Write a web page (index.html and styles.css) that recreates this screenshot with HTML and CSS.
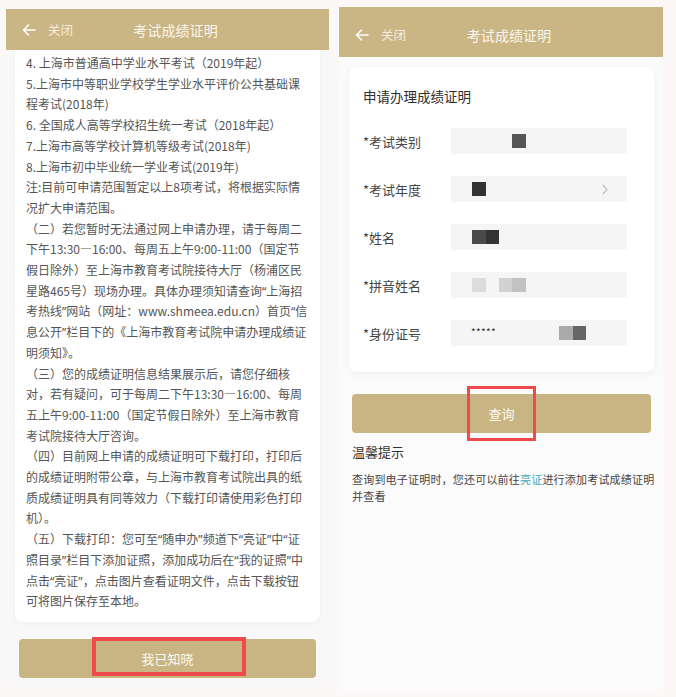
FILE: index.html
```html
<!DOCTYPE html>
<html lang="zh-CN">
<head>
<meta charset="utf-8">
<title>考试成绩证明</title>
<link rel="stylesheet" href="styles.css">
</head>
<body>
<div class="screens">
  <section class="phone phone-left">
    <header class="bar">
      <div class="bar-left">
        <svg class="back" viewBox="0 0 14 12" width="14" height="12"><path d="M13 6H1.5M6.5 1L1.5 6l5 5" fill="none" stroke="#fff" stroke-width="1.6" stroke-linecap="round" stroke-linejoin="round"/></svg>
        <span class="close">关闭</span>
      </div>
      <div class="bar-title">考试成绩证明</div>
      <div></div>
    </header>
    <div class="scroll">
      <div class="notice">
        <p>4. 上海市普通高中学业水平考试（2019年起）<br>5.上海市中等职业学校学生学业水平评价公共基础课<br>程考试(2018年)<br>6. 全国成人高等学校招生统一考试（2018年起）<br>7.上海市高等学校计算机等级考试(2018年)<br>8.上海市初中毕业统一学业考试(2019年)<br>注:目前可申请范围暂定以上8项考试，将根据实际情<br>况扩大申请范围。</p>
        <p>（二）若您暂时无法通过网上申请办理，请于每周二<br>下午13:30—16:00、每周五上午9:00-11:00（国定节<br>假日除外）至上海市教育考试院接待大厅（杨浦区民<br>星路465号）现场办理。具体办理须知请查询<span class="q">“</span>上海招<br>考热线<span class="q">”</span>网站（网址：www.shmeea.edu.cn）首页<span class="q">“</span>信<br>息公开<span class="q">”</span>栏目下的《上海市教育考试院申请办理成绩证<br>明须知》。</p>
        <p>（三）您的成绩证明信息结果展示后，请您仔细核<br>对，若有疑问，可于每周二下午13:30—16:00、每周<br>五上午9:00-11:00（国定节假日除外）至上海市教育<br>考试院接待大厅咨询。</p>
        <p>（四）目前网上申请的成绩证明可下载打印，打印后<br>的成绩证明附带公章，与上海市教育考试院出具的纸<br>质成绩证明具有同等效力（下载打印请使用彩色打印<br>机）。</p>
        <p>（五）下载打印：您可至<span class="q">“</span>随申办<span class="q">”</span>频道下<span class="q">“</span>亮证<span class="q">”</span>中<span class="q">“</span>证<br>照目录<span class="q">”</span>栏目下添加证照，添加成功后在<span class="q">“</span>我的证照<span class="q">”</span>中<br>点击<span class="q">“</span>亮证<span class="q">”</span>，点击图片查看证明文件，点击下载按钮<br>可将图片保存至本地。</p>
      </div>
    </div>
    <div class="btn-wrap btn-wrap-left">
      <button class="btn">我已知晓</button>
      <span class="mark mark-left"></span>
    </div>
  </section>

  <section class="phone phone-right">
    <header class="bar bar-tall">
      <div class="bar-left">
        <svg class="back" viewBox="0 0 14 12" width="14" height="12"><path d="M13 6H1.5M6.5 1L1.5 6l5 5" fill="none" stroke="#fff" stroke-width="1.6" stroke-linecap="round" stroke-linejoin="round"/></svg>
        <span class="close">关闭</span>
      </div>
      <div class="bar-title">考试成绩证明</div>
      <div></div>
    </header>
    <div class="form-area">
      <div class="form-card">
        <h2 class="form-title">申请办理成绩证明</h2>
        <div class="row"><span class="label">*考试类别</span><span class="field"><i class="px d5 off61"></i></span></div>
        <div class="row"><span class="label">*考试年度</span><span class="field"><i class="px d3 off21"></i><svg class="chev" viewBox="0 0 6 11" width="6" height="11"><path d="M0.8 0.8L5 5.5L0.8 10.2" fill="none" stroke="#9a9a9a" stroke-width="1"/></svg></span></div>
        <div class="row"><span class="label">*姓名</span><span class="field"><i class="px d4 off21"></i><i class="px d3"></i></span></div>
        <div class="row"><span class="label">*拼音姓名</span><span class="field"><i class="px l1 off21"></i><i class="px l2 off13"></i><i class="px l3"></i></span></div>
        <div class="row"><span class="label">*身份证号</span><span class="field"><span class="stars">*****</span><i class="px l4 off54"></i><i class="px d6"></i></span></div>
      </div>
      <div class="btn-wrap btn-wrap-right">
        <button class="btn">查询</button>
        <span class="mark mark-right"></span>
      </div>
      <h3 class="tip-title">温馨提示</h3>
      <p class="tip">查询到电子证明时，您还可以前往<span class="link">亮证</span>进行添加考试成绩证明并查看</p>
    </div>
  </section>
</div>
</body>
</html>
```

FILE: styles.css
```css
* { box-sizing: border-box; }
html, body { margin: 0; padding: 0; }
body {
  background: #fdf8f8;
  font-family: "Noto Sans CJK SC", "Noto Sans", sans-serif;
  width: 676px;
  height: 697px;
  overflow: hidden;
}
.screens {
  display: flex;
  align-items: flex-start;
  gap: 10px;
  padding-left: 6px;
}
.phone {
  background: #f8f8f8;
  display: flex;
  flex-direction: column;
}
.phone-left { width: 323px; height: 677px; margin-top: 9px; }
.phone-right { width: 324px; height: 683px; margin-top: 7px; background: #fcfbfb; }

.bar {
  height: 41px;
  background: #cab584;
  display: grid;
  grid-template-columns: 1fr auto 1fr;
  align-items: center;
  padding-left: 16px;
  flex: none;
}
.bar-tall { height: 50px; padding-top: 6px; }
.bar-left { display: flex; align-items: center; }
.back { display: block; }
.close {
  margin-left: 12px;
  font-size: 12.5px;
  color: #f4eddd;
  line-height: 16px;
}
.bar-title {
  font-size: 14px;
  color: #fbf7ef;
  line-height: 20px;
  letter-spacing: 0.1px;
}

.scroll { padding: 0 9px; flex: none; }
.notice {
  background: #fff;
  border-radius: 0 0 8px 8px;
  padding: 3px 6px 10px 11px;
  box-shadow: 0 1px 6px rgba(0,0,0,0.04);
}
.notice p {
  margin: 0;
  font-size: 12px;
  line-height: 20.7px;
  color: #555;
  white-space: nowrap;
}
.q { font-family: "Noto Sans", sans-serif; line-height: 1; }

.btn-wrap { position: relative; }
.btn-wrap-left { margin: 17px 13px 0; }
.btn-wrap-right { margin: 22px 12px 0 13px; }
.btn {
  display: block;
  width: 100%;
  height: 39px;
  border: 0;
  border-radius: 4px;
  background: #c9b583;
  color: #fbf8f0;
  font-family: inherit;
  font-size: 13px;
  padding: 0;
}
.mark {
  position: absolute;
  border: 4px solid #f04a4c;
}
.mark-left { left: 73px; top: -2px; width: 154px; height: 39px; }
.mark-right { left: 115px; top: -8px; width: 69px; height: 55px; border-width: 3px; }

.form-area { padding: 10px 0 0; }
.form-card {
  margin: 0 9px 0 10px;
  height: 305px;
  background: #fff;
  border-radius: 8px;
  padding: 19px 14px 15px;
  box-shadow: 0 2px 8px rgba(0,0,0,0.05);
}
.form-title {
  margin: 0 0 11px;
  font-size: 13.5px;
  font-weight: normal;
  line-height: 20px;
  color: #2e2e2e;
}
.row {
  height: 48px;
  display: flex;
  align-items: center;
}
.label {
  width: 88px;
  font-size: 13px;
  color: #444;
  flex: none;
}
.field {
  width: 176px;
  height: 26px;
  background: #f5f5f5;
  display: flex;
  align-items: center;
  position: relative;
}
.px { display: block; width: 13.5px; height: 13.5px; flex: none; }
.off61 { margin-left: 61px; }
.off21 { margin-left: 21px; }
.off13 { margin-left: 13px; }
.off54 { margin-left: 54px; }
.d3 { background: #333; }
.d4 { background: #4a4a4a; }
.d5 { background: #555; }
.d6 { background: #666; }
.l1 { background: #dcdcdc; }
.l2 { background: #d2d2d2; }
.l3 { background: #c2c2c2; }
.l4 { background: #aaa; }
.chev {
  display: block;
  margin-left: auto;
  margin-right: 19px;
}
.stars {
  margin-left: 20px;
  font-size: 10px;
  color: #333;
  letter-spacing: 0.3px;
  width: 34px;
  align-self: flex-start;
  margin-top: 4px;
}

.tip-title {
  margin: 9px 13px 0;
  font-size: 13px;
  font-weight: normal;
  line-height: 20px;
  color: #333;
}
.tip {
  margin: 9px 8px 0 13px;
  font-size: 11px;
  letter-spacing: 0.2px;
  line-height: 17px;
  color: #444;
}
.link { color: #3aa9bd; }
```
